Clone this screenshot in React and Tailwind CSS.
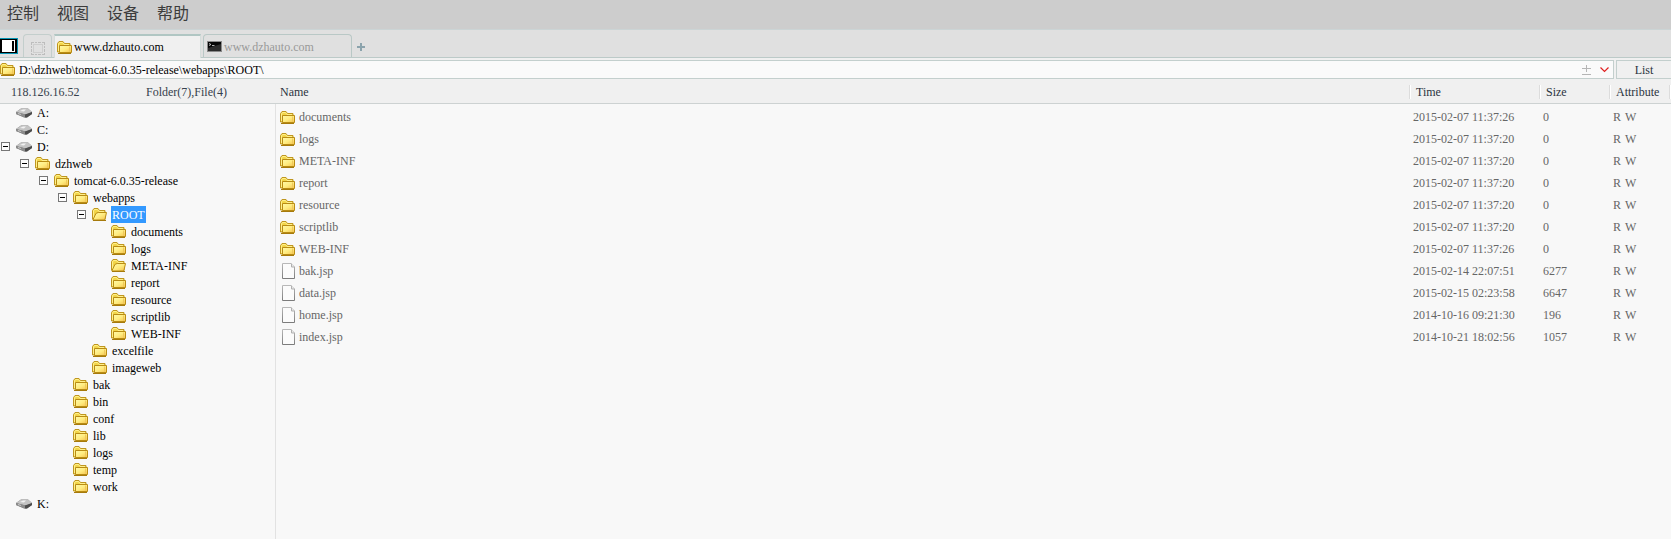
import React from "react";

function FolderIcon({ open = false }) {
  return (
    <svg width="15" height="13" viewBox="0 0 15 13" className="block shrink-0" aria-hidden="true">
      <defs>
        <linearGradient id="folderFront" x1="0" y1="0" x2="1" y2="1">
          <stop offset="0" stopColor="#fffaa8" />
          <stop offset="0.5" stopColor="#ffec80" />
          <stop offset="1" stopColor="#f5c14c" />
        </linearGradient>
      </defs>
      <path d="M.5 11V2.500L2 .5h4l1.500 2h5.500V11z" fill="#f2d548" stroke="#bf9620" />
      <path d="M1.500 10V3L2.500 1.500h3l1.500 2h5" fill="none" stroke="#fff08c" />
      {open ? (
        <path d="M.8 12L3.200 7l1-1.800 2-.7h8.300L12.800 12z" fill="url(#folderFront)" stroke="#b98c14" />
      ) : (
        <>
          <path d="M2.500 4.500h12v7h-12z" fill="url(#folderFront)" stroke="#b98c14" />
          <path d="M12.500 5.500v5.500" stroke="#efc95c" />
        </>
      )}
      <path d="M1 12.500h13" stroke="#a67a0c" />
    </svg>
  );
}

function DriveIcon() {
  return (
    <svg width="16" height="10" viewBox="0 0 16 10" className="block shrink-0" aria-hidden="true">
      <path d="M0 4L5 .5h7L16 4v2l-5 3.500H8L0 6z" fill="#777" />
      <path d="M0 4L5 .5h7L16 4 10 6.500z" fill="#c4c4c4" />
      <path d="M4 3l3-1.500h3L8 3.500z" fill="#f2f2f2" />
      <path d="M0 4l9 2.500v3L0 6z" fill="#8c8c8c" />
      <path d="M9 6.500L16 4v2l-5 3.500H9z" fill="#4c4c4c" />
      <path d="M2 5.500l3 1" stroke="#ccc" />
    </svg>
  );
}

function FileIcon() {
  return (
    <svg width="13" height="16" viewBox="0 0 13 16" className="block shrink-0" aria-hidden="true">
      <defs>
        <linearGradient id="fileEdge" x1="0" y1="0" x2="0" y2="1">
          <stop offset="0" stopColor="#b8b8b8" />
          <stop offset="1" stopColor="#7c7c7c" />
        </linearGradient>
      </defs>
      <path d="M.5.5h8.500l3.500 3.500v11.500H.5z" fill="#fbfbfb" stroke="url(#fileEdge)" />
      <path d="M9.500.5v3.500h3" fill="#e6e6e6" stroke="#b0b0b0" />
    </svg>
  );
}

function PanelIcon() {
  return (
    <svg width="18" height="16" viewBox="0 0 18 16" className="block" aria-hidden="true">
      <path d="M0 0h18v16H0z" fill="#0795b4" />
      <path d="M0 1h17v14H0z" fill="#000" />
      <path d="M2 2h13v12H2z" fill="#fff" />
      <path d="M12 3h2v10h-2z" fill="#000" />
    </svg>
  );
}

function FrameIcon() {
  return (
    <svg width="14" height="13" viewBox="0 0 14 13" className="block" fill="none" stroke="#bdbdbd" aria-hidden="true">
      <path d="M0 .5h14M0 12.500h14" strokeDasharray="3 1 2 1" />
      <path d="M.5 0v13M13.500 0v13" strokeDasharray="3 1 2 1" />
      <path d="M2.500 2.500h9v8h-9z" strokeDasharray="1 1" />
    </svg>
  );
}

function ConsoleIcon() {
  return (
    <svg width="15" height="11" viewBox="0 0 15 11" className="block shrink-0" aria-hidden="true">
      <path d="M0 0h15v11H0z" fill="#8a8a8a" />
      <path d="M1 1h13v9H1z" fill="#050505" />
      <path d="M1 10V7l13-4v7z" fill="#2c2c2c" />
      <path d="M2 2.500l2 1-2 1M5 4.500h2.500" fill="none" stroke="#ddd" strokeWidth=".8" />
    </svg>
  );
}

const root = {
  name: "ROOT",
  open: true,
  selected: true,
  children: [
    { name: "documents" },
    { name: "logs" },
    { name: "META-INF", open: true },
    { name: "report" },
    { name: "resource" },
    { name: "scriptlib" },
    { name: "WEB-INF" },
  ],
};

const drives = [
  { name: "A:", drive: true },
  { name: "C:", drive: true },
  {
    name: "D:",
    drive: true,
    children: [
      {
        name: "dzhweb",
        children: [
          {
            name: "tomcat-6.0.35-release",
            children: [
              { name: "webapps", children: [root, { name: "excelfile" }, { name: "imageweb" }] },
              { name: "bak" },
              { name: "bin" },
              { name: "conf" },
              { name: "lib" },
              { name: "logs" },
              { name: "temp" },
              { name: "work" },
            ],
          },
        ],
      },
    ],
  },
  { name: "K:", drive: true },
];

const entries = [
  ["documents", "2015-02-07 11:37:26", "0"],
  ["logs", "2015-02-07 11:37:20", "0"],
  ["META-INF", "2015-02-07 11:37:20", "0"],
  ["report", "2015-02-07 11:37:20", "0"],
  ["resource", "2015-02-07 11:37:20", "0"],
  ["scriptlib", "2015-02-07 11:37:20", "0"],
  ["WEB-INF", "2015-02-07 11:37:26", "0"],
  ["bak.jsp", "2015-02-14 22:07:51", "6277"],
  ["data.jsp", "2015-02-15 02:23:58", "6647"],
  ["home.jsp", "2014-10-16 09:21:30", "196"],
  ["index.jsp", "2014-10-21 18:02:56", "1057"],
];

function TreeNode({ node }) {
  return (
    <li>
      <div className="flex h-[17px] items-center">
        <span className="flex w-[15px] shrink-0">
          {node.children && (
            <button type="button" aria-label={`Collapse ${node.name}`} className="flex size-[9px] items-center justify-center border border-[#777] bg-[#fcfcfc]">
              <span className="h-px w-[5px] bg-black" />
            </button>
          )}
        </span>
        {node.drive ? <DriveIcon /> : <FolderIcon open={node.open} />}
        <button
          type="button"
          className={
            node.selected
              ? "ml-1 h-[17px] bg-[#3399ff] px-px leading-4 text-white"
              : "ml-1 px-px leading-4"
          }
        >
          {node.name}
        </button>
      </div>
      {node.children && (
        <ul className="pl-[19px]">
          {node.children.map((child) => (
            <TreeNode key={child.name} node={child} />
          ))}
        </ul>
      )}
    </li>
  );
}

function HeaderCell({ children, className }) {
  return (
    <th scope="col" className={`${className} p-0 text-left font-normal`}>
      <span className="flex h-[14px] items-center border-l border-[#dcdcdc] pl-[6px] leading-4 shadow-[inset_1px_0_0_#ffffff]">{children}</span>
    </th>
  );
}

export default function App() {
  return (
    <div className="flex min-h-screen flex-col bg-[#f8f8f8] font-['Liberation_Serif','Noto_Sans_CJK_SC',serif] text-xs text-black">
      <nav className="flex h-[30px] gap-[18px] border-b border-[#cbd4d5] bg-[#cdcdcd] pl-[7px] font-['Noto_Sans_CJK_SC',sans-serif] text-base leading-6 text-[#3c3c3c]">
        <button type="button" className="h-6">控制</button>
        <button type="button" className="h-6">视图</button>
        <button type="button" className="h-6">设备</button>
        <button type="button" className="h-6">帮助</button>
      </nav>

      <div className="flex h-7 items-end border-b border-[#bccac8] bg-[#e0e0e0]">
        <button type="button" aria-label="Toggle side panel" className="mb-[3px]">
          <PanelIcon />
        </button>
        <button type="button" aria-label="Full screen" className="ml-[5px] flex h-[23px] w-[29px] items-center justify-center rounded-t border border-b-0 border-[#c3cecc] pt-1">
          <FrameIcon />
        </button>
        <button type="button" className="ml-[2px] -mb-px flex h-6 w-[147px] items-center gap-[2px] border-x border-t-2 border-x-[#d5dddb] border-t-[#b0c6c3] bg-[#f0f0f0] pl-[2px]">
          <FolderIcon />
          <span>www.dzhauto.com</span>
        </button>
        <button type="button" className="ml-[2px] flex h-[23px] w-[149px] items-center gap-[2px] rounded-t border border-b-0 border-[#b9c8c6] pt-px pl-[3px] text-[#999]">
          <ConsoleIcon />
          <span>www.dzhauto.com</span>
        </button>
        <button type="button" aria-label="New tab" className="mb-[6px] ml-[5px]">
          <svg width="8" height="8" viewBox="0 0 8 8" className="block" aria-hidden="true">
            <path d="M4 0v8M0 4h8" stroke="#8ba3ac" strokeWidth="2" />
          </svg>
        </button>
      </div>

      <div className="flex h-[21px] gap-[2px] bg-[#f0f0f0] pt-[2px]">
        <div className="flex min-w-0 flex-1 items-center border border-l-0 border-[#c3cfcd] bg-[#fafafa] pr-1">
          <FolderIcon />
          <input
            aria-label="Path"
            defaultValue={"D:\\dzhweb\\tomcat-6.0.35-release\\webapps\\ROOT\\"}
            className="ml-1 min-w-0 flex-1 bg-transparent leading-4 outline-none"
          />
          <button type="button" aria-label="Adjust bar">
            <svg width="9" height="10" viewBox="0 0 9 10" className="block" stroke="#b5b5b5" aria-hidden="true">
              <path d="M4.500 0v7M0 3.500h9M0 9.500h9" />
            </svg>
          </button>
          <button type="button" aria-label="Path history" className="ml-[9px]">
            <svg width="9" height="6" viewBox="0 0 9 6" className="block" fill="none" stroke="#e02020" aria-hidden="true">
              <path d="M.5.5l4 4 4-4" strokeWidth="1.200" />
            </svg>
          </button>
        </div>
        <button type="button" className="w-[55px] border border-r-0 border-[#c3cfcd] bg-[#f0f0f0] leading-4 text-[#2c3440]">List</button>
      </div>

      <main className="flex flex-1">
        <section aria-label="Folders" className="flex w-[276px] shrink-0 flex-col">
          <header className="flex h-[25px] items-center border-b border-[#cdd2d2] bg-[#f0f0f0] pt-px pl-[11px] text-[#36404c]">
            <span className="w-[135px]">118.126.16.52</span>
            <span>Folder(7),File(4)</span>
          </header>
          <ul className="flex-1 border-r border-[#e2e2e2] pl-px">
            {drives.map((node) => (
              <TreeNode key={node.name} node={node} />
            ))}
          </ul>
        </section>

        <section aria-label="Files" className="min-w-0 flex-1">
          <table className="w-full table-fixed border-separate border-spacing-0">
            <thead className="bg-[#f0f0f0] text-[#2c3440]">
              <tr className="h-[25px] [&>th]:border-b [&>th]:border-[#cdd2d2] [&>th]:pt-px">
                <th scope="col" className="p-0 pl-1 text-left font-normal">Name</th>
                <HeaderCell className="w-[130px]">Time</HeaderCell>
                <HeaderCell className="w-[70px]">Size</HeaderCell>
                <HeaderCell className="w-[60px]">Attribute</HeaderCell>
                <th aria-hidden="true" className="w-[2px] p-0">
                  <span className="block h-[14px] border-l border-[#dcdcdc] bg-white" />
                </th>
              </tr>
            </thead>
            <tbody className="text-[#666] before:block before:h-[2px]">
              {entries.map(([name, time, size]) => (
                <tr key={name} className="h-[22px]">
                  <td className="p-0 pl-1">
                    <span className="flex items-center gap-1">
                      {name.endsWith(".jsp") ? (
                        <span className="pl-[2px]">
                          <FileIcon />
                        </span>
                      ) : (
                        <FolderIcon />
                      )}
                      {name}
                    </span>
                  </td>
                  <td className="p-0 pl-1">{time}</td>
                  <td className="p-0 pl-1">{size}</td>
                  <td className="p-0 pl-1">
                    <span className="flex gap-1">
                      <span>R</span>
                      <span>W</span>
                    </span>
                  </td>
                </tr>
              ))}
            </tbody>
          </table>
        </section>
      </main>
    </div>
  );
}
